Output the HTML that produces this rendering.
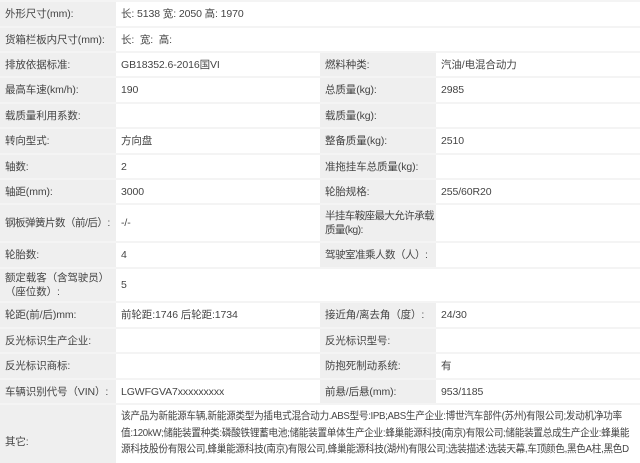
<!DOCTYPE html>
<html><head><meta charset="utf-8"><style>
*{margin:0;padding:0;box-sizing:border-box}
body{width:640px;height:448px;overflow:hidden;background:#fff;font-family:"Liberation Sans","Noto Sans CJK SC",sans-serif;font-size:10.5px;color:#444}
.r{position:absolute;left:0;width:640px;border-top:2px solid #f4f4f4}
.c{position:absolute;top:0;bottom:0;display:flex;align-items:center;padding-left:5px;line-height:14px;white-space:nowrap;letter-spacing:-0.1px;overflow:hidden}
.g{background:#efefef}
.c1{left:0;width:116px}
.c2{left:116px;width:204px}
.c3{left:320px;width:116px}
.c4{left:436px;width:204px}
.w{left:116px;width:524px}
.p{letter-spacing:-0.35px;flex-direction:column}
.p span{display:block;transform:scaleX(0.92);transform-origin:left center;height:16.5px}
</style></head><body>
<div class="r" style="top:0;height:26px"><div class="c c1 g">外形尺寸(mm):</div><div class="c w">长: 5138 宽: 2050 高: 1970</div></div>
<div class="r" style="top:26px;height:25px"><div class="c c1 g">货箱栏板内尺寸(mm):</div><div class="c w">长: &nbsp;宽: &nbsp;高:</div></div>
<div class="r" style="top:51px;height:25px"><div class="c c1 g">排放依据标准:</div><div class="c c2">GB18352.6-2016国VI</div><div class="c c3 g">燃料种类:</div><div class="c c4">汽油/电混合动力</div></div>
<div class="r" style="top:76px;height:26px"><div class="c c1 g">最高车速(km/h):</div><div class="c c2">190</div><div class="c c3 g">总质量(kg):</div><div class="c c4">2985</div></div>
<div class="r" style="top:102px;height:25px"><div class="c c1 g">载质量利用系数:</div><div class="c c2"></div><div class="c c3 g">载质量(kg):</div><div class="c c4"></div></div>
<div class="r" style="top:127px;height:26px"><div class="c c1 g">转向型式:</div><div class="c c2">方向盘</div><div class="c c3 g">整备质量(kg):</div><div class="c c4">2510</div></div>
<div class="r" style="top:153px;height:25px"><div class="c c1 g">轴数:</div><div class="c c2">2</div><div class="c c3 g">准拖挂车总质量(kg):</div><div class="c c4"></div></div>
<div class="r" style="top:178px;height:25px"><div class="c c1 g">轴距(mm):</div><div class="c c2">3000</div><div class="c c3 g">轮胎规格:</div><div class="c c4">255/60R20</div></div>
<div class="r" style="top:203px;height:38px"><div class="c c1 g" style="letter-spacing:-0.5px">钢板弹簧片数（前/后）:</div><div class="c c2">-/-</div><div class="c c3 g" style="letter-spacing:-0.6px">半挂车鞍座最大允许承载<br>质量(kg):</div><div class="c c4"></div></div>
<div class="r" style="top:241px;height:26px"><div class="c c1 g">轮胎数:</div><div class="c c2">4</div><div class="c c3 g" style="letter-spacing:-0.5px">驾驶室准乘人数（人）:</div><div class="c c4"></div></div>
<div class="r" style="top:267px;height:34px"><div class="c c1 g">额定载客（含驾驶员）<br>（座位数）:</div><div class="c w">5</div></div>
<div class="r" style="top:301px;height:26px"><div class="c c1 g">轮距(前/后)mm:</div><div class="c c2">前轮距:1746 后轮距:1734</div><div class="c c3 g">接近角/离去角（度）:</div><div class="c c4">24/30</div></div>
<div class="r" style="top:327px;height:25px"><div class="c c1 g">反光标识生产企业:</div><div class="c c2"></div><div class="c c3 g">反光标识型号:</div><div class="c c4"></div></div>
<div class="r" style="top:352px;height:26px"><div class="c c1 g">反光标识商标:</div><div class="c c2"></div><div class="c c3 g">防抱死制动系统:</div><div class="c c4">有</div></div>
<div class="r" style="top:378px;height:25px"><div class="c c1 g">车辆识别代号（VIN）:</div><div class="c c2">LGWFGVA7xxxxxxxxx</div><div class="c c3 g">前悬/后悬(mm):</div><div class="c c4">953/1185</div></div>
<div class="r" style="top:403px;height:60px"><div class="c c1 g" style="align-items:flex-start;padding-top:30px">其它:</div><div class="c w p" style="align-items:flex-start;padding-top:3px;line-height:16.5px"><span>该产品为新能源车辆,新能源类型为插电式混合动力.ABS型号:IPB;ABS生产企业:博世汽车部件(苏州)有限公司;发动机净功率</span><span>值:120kW;储能装置种类:磷酸铁锂蓄电池;储能装置单体生产企业:蜂巢能源科技(南京)有限公司;储能装置总成生产企业:蜂巢能</span><span>源科技股份有限公司,蜂巢能源科技(南京)有限公司,蜂巢能源科技(湖州)有限公司;选装描述:选装天幕,车顶颜色,黑色A柱,黑色D</span></div></div>
</body></html>
